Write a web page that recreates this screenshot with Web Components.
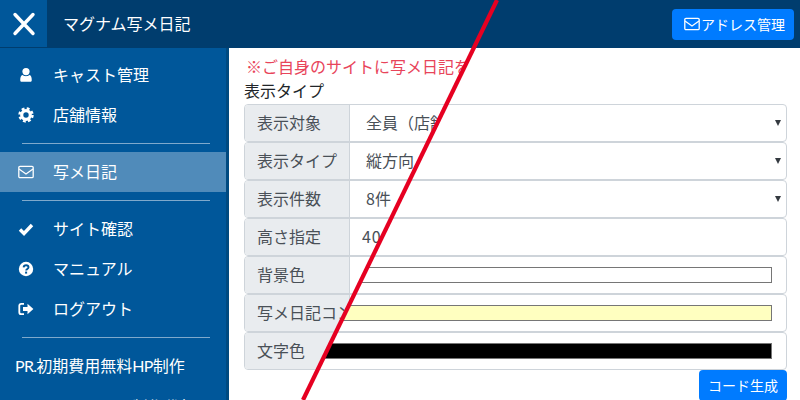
<!DOCTYPE html>
<html lang="ja">
<head>
<meta charset="utf-8">
<title>マグナム写メ日記</title>
<style>
  html, body { margin: 0; height: 100%; overflow: hidden; background: #fff; }
  body { font: 16px/24px "Noto Sans CJK JP", "Noto Sans", sans-serif; color: #212529; }
  .lat { letter-spacing: -.7px; }
</style>
</head>
<body>
<app-page>
  <top-bar slot="top" title-text="マグナム写メ日記"></top-bar>
  <side-nav slot="side">
    <nav-item icon="user">キャスト管理</nav-item>
    <nav-item icon="cog">店舗情報</nav-item>
    <nav-rule></nav-rule>
    <nav-item icon="mail" active>写メ日記</nav-item>
    <nav-rule></nav-rule>
    <nav-item icon="check">サイト確認</nav-item>
    <nav-item icon="help">マニュアル</nav-item>
    <nav-item icon="out">ログアウト</nav-item>
    <nav-rule></nav-rule>
    <nav-item plain><span class="lat">PR.</span>初期費用無料<span class="lat">HP</span>制作</nav-item>
    <nav-item plain low><span class="lat">PR.</span>ホームページ制作代行</nav-item>
  </side-nav>
  <code-form slot="main">
    <form-row label="表示対象" kind="select" value="全員（店舗"></form-row>
    <form-row label="表示タイプ" kind="select" value="縦方向"></form-row>
    <form-row label="表示件数" kind="select" value="8件"></form-row>
    <form-row label="高さ指定" kind="text" value="400"></form-row>
    <form-row label="背景色" kind="color" value="#ffffff"></form-row>
    <form-row label="写メ日記コン" kind="color" value="#ffffc0"></form-row>
    <form-row label="文字色" kind="color" value="#000000"></form-row>
  </code-form>
</app-page>

<script>
// the red diagonal runs (497,0) -> (303,400), text left of it stays, the colour bars only show right of it
function lineX(y) { return 497 - 0.485 * y; }

function wipe(el) {
  var r = el.getBoundingClientRect();
  var a = lineX(r.top) - r.left;
  var b = lineX(r.bottom) - r.left;
  el.style.clipPath = `polygon(0 0, ${a}px 0, ${b}px ${r.height}px, 0 ${r.height}px)`;
}

function wipeRight(el) {
  var r = el.getBoundingClientRect();
  var a = lineX(r.top) - r.left;
  var b = lineX(r.bottom) - r.left;
  el.style.clipPath = `polygon(${a}px 0, 100% 0, 100% 100%, ${b}px 100%)`;
}

const ICONS = {
  user: '<circle cx="8" cy="4.6" r="3.6" fill="#fff"/><path d="M2.2 14.6c-.8 0-1.4-.6-1.4-1.5 0-2.6.7-5 3-5.2 1 .8 2.6 1.2 4.2 1.2s3.200-.4 4.200-1.200c2.300.2 3 2.600 3 5.200 0 .9-.6 1.500-1.400 1.500z" fill="#fff" transform="translate(1.600 .2) scale(.8 1)"/>',
  cog: '<circle cx="8" cy="8" r="4.300" fill="none" stroke="#fff" stroke-width="3.200"/><circle cx="8" cy="8" r="6.500" fill="none" stroke="#fff" stroke-width="2.400" stroke-dasharray="2.800 2.300"/>',
  mail: '<rect x=".8" y="2.300" width="14.400" height="11.400" rx="1.200" fill="none" stroke="#fff" stroke-width="1.300"/><path d="M1 5l7 5 7-5" fill="none" stroke="#fff" stroke-width="1.300"/>',
  check: '<path d="M2 8.500l4 4 8-8.500" fill="none" stroke="#fff" stroke-width="3.400"/>',
  help: '<circle cx="8" cy="8" r="7.200" fill="#fff"/><path d="M5.600 6.300c.2-1.400 1.200-2 2.500-2 1.400 0 2.400.8 2.400 2 0 1.800-2.300 1.700-2.300 3.300" fill="none" stroke="#00579a" stroke-width="1.900"/><rect x="7.100" y="10.600" width="2" height="2" fill="#00579a"/>',
  out: '<path d="M6 2.800H3.200C2 2.800 1.300 3.600 1.300 4.800v6.400c0 1.200.7 2 1.900 2H6" fill="none" stroke="#fff" stroke-width="1.800"/><path d="M5 6h4.500V2.800L15.400 8l-5.900 5.200V10H5z" fill="#fff"/>'
};

class AppPage extends HTMLElement {
  constructor() {
    super();
    this.attachShadow({mode: 'open'}).innerHTML = `
      <style>
        :host { display: block; position: relative; width: 800px; height: 400px; overflow: hidden; }
        .body { display: flex; height: 352px; }
        svg { position: absolute; left: 0; top: 0; pointer-events: none; }
      </style>
      <slot name="top"></slot>
      <div class="body">
        <slot name="side"></slot>
        <slot name="main"></slot>
      </div>
      <svg width="800" height="400"><line x1="497" y1="0" x2="303" y2="400" stroke="#e60021" stroke-width="4.200"/></svg>`;
  }
}
customElements.define('app-page', AppPage);

class TopBar extends HTMLElement {
  constructor() {
    super();
    this.attachShadow({mode: 'open'}).innerHTML = `
      <style>
        :host { display: flex; align-items: center; height: 48px; background: #003d6e; color: #fff; }
        .logo { width: 47px; height: 47px; background: #00579a; display: flex; align-items: center; justify-content: center; align-self: flex-start; }
        .name { margin-left: 16px; padding-bottom: 2px; flex: 1; }
        .btn { display: flex; align-items: center; height: 31px; margin-right: 6px; padding: 0 9px 0 12px; background: #007bff; border-radius: 4px; font-size: 14px; }
        .btn svg { margin-right: 1px; }
      </style>
      <div class="logo">
        <svg width="24" height="24" viewBox="0 0 24 24"><path d="M3 2.500l18 19M21 2.500l-18 19" stroke="#fff" stroke-width="3.400" stroke-linecap="round"/></svg>
      </div>
      <div class="name">${this.getAttribute('title-text')}</div>
      <div class="btn">
        <svg width="16" height="16" viewBox="0 0 16 16">${ICONS.mail}</svg>アドレス管理
      </div>`;
  }
}
customElements.define('top-bar', TopBar);

class SideNav extends HTMLElement {
  constructor() {
    super();
    this.attachShadow({mode: 'open'}).innerHTML = `
      <style>
        :host { display: block; box-sizing: border-box; width: 229px; flex: none; padding-top: 7px; background: #00579a; border-right: 3px solid #004a80; }
      </style>
      <slot></slot>`;
  }
}
customElements.define('side-nav', SideNav);

class NavItem extends HTMLElement {
  constructor() {
    super();
    var icon = this.getAttribute('icon');
    this.attachShadow({mode: 'open'}).innerHTML = `
      <style>
        :host { display: flex; align-items: center; height: 40px; color: #fff; white-space: nowrap; }
        :host([active]) { background: #508bba; }
        :host([plain]) { padding-left: 15px; font-family: Lato, "Noto Sans CJK JP", sans-serif; }
        :host([plain]) .txt { padding-bottom: 0; }
        :host([low]) .txt { padding-top: 1px; }
        svg { width: 16px; height: 16px; margin: 0 19px 0 18px; }
        .txt { padding-bottom: 2px; }
      </style>
      ${icon ? `<svg viewBox="0 0 16 16">${ICONS[icon]}</svg>` : ''}
      <div class="txt"><slot></slot></div>`;
  }
}
customElements.define('nav-item', NavItem);

class NavRule extends HTMLElement {
  constructor() {
    super();
    this.attachShadow({mode: 'open'}).innerHTML = `
      <style>
        :host { display: block; height: 1px; margin: 8px 16px 8px 22px; background: #7fa9cc; }
      </style>`;
  }
}
customElements.define('nav-rule', NavRule);

class CodeForm extends HTMLElement {
  constructor() {
    super();
    this.attachShadow({mode: 'open'}).innerHTML = `
      <style>
        :host { display: block; flex: 1; box-sizing: border-box; padding: 6px 13px 0 15px; }
        .note { display: inline-block; padding-left: 2px; color: #e8445a; white-space: nowrap; vertical-align: top; }
        h2 { margin: 0 0 2px; font: inherit; }
        .foot { display: flex; justify-content: flex-end; }
        .btn { height: 31px; box-sizing: border-box; padding: 0 9px; background: #007bff; color: #fff; border-radius: 4px; font-size: 14px; line-height: 30px; }
      </style>
      <div class="note">※ご自身のサイトに写メ日記を</div>
      <h2>表示タイプ</h2>
      <slot></slot>
      <div class="foot"><div class="btn">コード生成</div></div>`;
  }
  wipe() { wipe(this.shadowRoot.querySelector('.note')); }
}
customElements.define('code-form', CodeForm);

class FormRow extends HTMLElement {
  constructor() {
    super();
    var kind = this.getAttribute('kind');
    var value = this.getAttribute('value');
    var inner = '';
    if (kind == 'color') inner = `<div class="swatch" style="background:${value}"></div>`;
    else inner = `<span class="val ${kind}">${value}</span>`;
    this.attachShadow({mode: 'open'}).innerHTML = `
      <style>
        :host { display: block; position: relative; box-sizing: border-box; height: 38px; border: 1px solid #ced4da; border-radius: 4px; color: #495057; white-space: nowrap; }
        .row { display: flex; height: 100%; }
        .label { box-sizing: border-box; width: 105px; flex: none; padding-left: 12px; line-height: 34px; background: #e9ecef; border-right: 1px solid #ced4da; border-radius: 3px 0 0 3px; overflow: hidden; }
        .val { display: inline-block; line-height: 34px; }
        .select { margin-left: 16px; }
        .text { margin-left: 12px; letter-spacing: .8px; }
        .arrow { position: absolute; right: 5px; top: 15px; width: 0; height: 0; border: 3.500px solid transparent; border-top: 6px solid #343a40; border-bottom: 0; }
        .swatch { position: absolute; left: -1px; right: 14px; top: 10px; height: 16px; box-sizing: border-box; border: 1px solid #767676; }
      </style>
      <div class="row">
        <div class="label">${this.getAttribute('label')}</div>
        <div>${inner}</div>
      </div>
      ${kind == 'select' ? '<div class="arrow"></div>' : ''}`;
  }
  wipe() {
    this.shadowRoot.querySelectorAll('.label, .val').forEach(wipe);
    this.shadowRoot.querySelectorAll('.swatch').forEach(wipeRight);
  }
}
customElements.define('form-row', FormRow);

document.querySelector('code-form').wipe();
document.querySelectorAll('form-row').forEach(function (r) { r.wipe(); });
</script>
</body>
</html>
